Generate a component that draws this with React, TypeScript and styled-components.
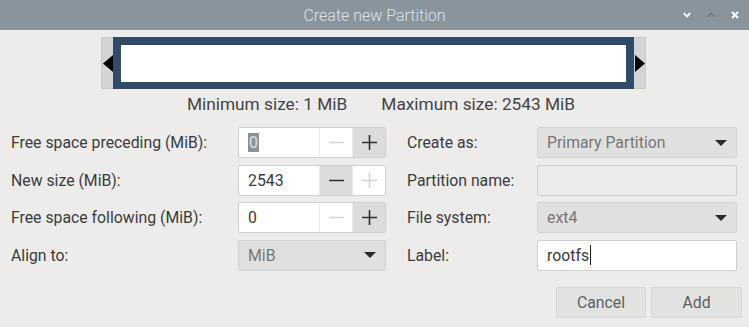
import React from "react";
import styled, { createGlobalStyle } from "styled-components";

const GlobalStyle = createGlobalStyle`
  html, body { margin: 0; padding: 0; background: #edeceb; }
  body { font-family: Roboto, "Liberation Sans", sans-serif; }
  * { box-sizing: border-box; }
`;

const Window = styled.div`
  width: 749px;
  height: 327px;
  display: flex;
  flex-direction: column;
  background: #edeceb;
  overflow: hidden;
`;

const TitleBar = styled.div`
  height: 30px;
  background: #8a949d;
  display: grid;
  grid-template-columns: 1fr auto 1fr;
  align-items: center;
`;

const Title = styled.div`
  color: #dde2e6;
  font-size: 16px;
  font-weight: 300;
`;

const Controls = styled.div`
  display: flex;
  align-items: center;
  justify-content: flex-end;
  gap: 16px;
  padding-right: 10px;
`;

const Control = styled.svg<{ $dim?: boolean }>`
  width: 8px;
  height: 8px;
  color: ${(p) => (p.$dim ? "#6f7982" : "#ffffff")};
`;

const Content = styled.div`
  flex: 1;
  display: flex;
  flex-direction: column;
  padding: 7px 12px 0 11px;
`;

const PartitionBar = styled.div`
  width: 545px;
  height: 52px;
  margin-left: 90px;
  background: #d4d4d3;
  border: 1px solid #c9c9c8;
  display: flex;
  align-items: stretch;
`;

const ArrowZone = styled.div`
  width: 11px;
  display: flex;
  align-items: center;
  justify-content: center;
`;

const PartitionBlock = styled.div`
  flex: 1;
  border: 8px solid #2f4b69;
  border-bottom-width: 7px;
  margin-top: -1px;
  margin-bottom: -1px;
  background: #ffffff;
`;

const InfoRow = styled.div`
  display: flex;
  justify-content: center;
  gap: 34px;
  padding-left: 14px;
  margin-top: 5px;
  font-size: 17.3px;
  color: #444;
  line-height: 20px;
`;

const Form = styled.div`
  display: grid;
  grid-template-columns: 227px 148px 21px 130px 200px;
  grid-auto-rows: 31px;
  row-gap: 6.5px;
  margin-top: 13px;
`;

const Label = styled.div`
  display: flex;
  align-items: center;
  font-size: 15.8px;
  color: #3c3c3c;
`;

const Spacer = styled.div``;

const SpinBox = styled.div`
  display: flex;
  border: 1px solid #cfcfce;
  border-radius: 2px;
  background: #fff;
  overflow: hidden;
`;

const SpinValue = styled.div`
  flex: 1;
  display: flex;
  align-items: center;
  padding-left: 9px;
  font-size: 15.8px;
  color: #3a3a3a;
`;

const Selected = styled.span`
  background: #8a949d;
  color: #dfe3e6;
  padding: 0 1px;
  line-height: 19px;
`;

const SpinButton = styled.div<{ $active: boolean }>`
  width: 33px;
  display: flex;
  align-items: center;
  justify-content: center;
  border-left: 1px solid #ebebea;
  background: ${(p) => (p.$active ? "#dcdcdb" : "#ffffff")};
  color: ${(p) => (p.$active ? "#2f2f2f" : "#d4d4d4")};
`;

const Select = styled.div`
  display: flex;
  align-items: center;
  justify-content: space-between;
  padding: 0 9px 0 9px;
  background: #e0e0df;
  border: 1px solid #d2d2d1;
  border-radius: 2px;
  font-size: 15.8px;
  color: #767676;
`;

const TextField = styled.div<{ $disabled?: boolean }>`
  display: flex;
  align-items: center;
  padding-left: 9px;
  background: ${(p) => (p.$disabled ? "#ebebea" : "#ffffff")};
  border: 1px solid #cfcfce;
  border-radius: 2px;
  font-size: 15.8px;
  color: #3a3a3a;
`;

const Caret = styled.span`
  display: inline-block;
  width: 1px;
  height: 20px;
  background: #222;
  margin-left: 1px;
`;

const ButtonRow = styled.div`
  display: flex;
  justify-content: flex-end;
  gap: 5px;
  margin-top: 16px;
  margin-right: -5px;
`;

const Button = styled.div<{ $w: number }>`
  width: ${(p) => p.$w}px;
  height: 31px;
  display: flex;
  align-items: center;
  justify-content: center;
  background: #e2e2e1;
  border: 1px solid #d6d6d5;
  border-radius: 2px;
  font-size: 15.8px;
  color: #5e5e5e;
`;

const Minus = () => (
  <svg width="15" height="15" viewBox="0 0 15 15">
    <path d="M0 7.5H15" stroke="currentColor" strokeWidth="1.6" />
  </svg>
);

const Plus = () => (
  <svg width="15" height="15" viewBox="0 0 15 15">
    <path d="M0 7.5H15M7.5 0V15" stroke="currentColor" strokeWidth="1.6" />
  </svg>
);

const DropArrow = () => (
  <svg width="12" height="6" viewBox="0 0 12 6">
    <path d="M0 0H12L6 6Z" fill="#2a2a2a" />
  </svg>
);

const Spin = ({
  value,
  minus,
  plus,
  selected,
}: {
  value: string;
  minus: boolean;
  plus: boolean;
  selected?: boolean;
}) => (
  <SpinBox>
    <SpinValue>{selected ? <Selected>{value}</Selected> : value}</SpinValue>
    <SpinButton $active={minus}>
      <Minus />
    </SpinButton>
    <SpinButton $active={plus}>
      <Plus />
    </SpinButton>
  </SpinBox>
);

export default function App() {
  return (
    <>
      <GlobalStyle />
      <Window>
        <TitleBar>
          <span />
          <Title>Create new Partition</Title>
          <Controls>
            <Control viewBox="0 0 8 8">
              <path d="M0.8 2.2L4 5.4L7.2 2.2" stroke="currentColor" strokeWidth="1.8" fill="none" />
            </Control>
            <Control viewBox="0 0 8 8" $dim>
              <path d="M0.8 5.6L4 2.4L7.2 5.6" stroke="currentColor" strokeWidth="1.6" fill="none" />
            </Control>
            <Control viewBox="0 0 8 8">
              <path d="M1 1L7 7M7 1L1 7" stroke="currentColor" strokeWidth="1.9" fill="none" />
            </Control>
          </Controls>
        </TitleBar>
        <Content>
          <PartitionBar>
            <ArrowZone>
              <svg width="10" height="17" viewBox="0 0 10 17">
                <path d="M10 0V17L0 8.5Z" fill="#000" />
              </svg>
            </ArrowZone>
            <PartitionBlock />
            <ArrowZone>
              <svg width="10" height="17" viewBox="0 0 10 17">
                <path d="M0 0V17L10 8.5Z" fill="#000" />
              </svg>
            </ArrowZone>
          </PartitionBar>
          <InfoRow>
            <span>Minimum size: 1 MiB</span>
            <span>Maximum size: 2543 MiB</span>
          </InfoRow>
          <Form>
            <Label>Free space preceding (MiB):</Label>
            <Spin value="0" minus={false} plus={true} selected />
            <Spacer />
            <Label>Create as:</Label>
            <Select>
              <span>Primary Partition</span>
              <DropArrow />
            </Select>

            <Label>New size (MiB):</Label>
            <Spin value="2543" minus={true} plus={false} />
            <Spacer />
            <Label>Partition name:</Label>
            <TextField $disabled />

            <Label>Free space following (MiB):</Label>
            <Spin value="0" minus={false} plus={true} />
            <Spacer />
            <Label>File system:</Label>
            <Select>
              <span>ext4</span>
              <DropArrow />
            </Select>

            <Label>Align to:</Label>
            <Select>
              <span>MiB</span>
              <DropArrow />
            </Select>
            <Spacer />
            <Label>Label:</Label>
            <TextField>
              rootfs
              <Caret />
            </TextField>
          </Form>
          <ButtonRow>
            <Button $w={90}>Cancel</Button>
            <Button $w={91}>Add</Button>
          </ButtonRow>
        </Content>
      </Window>
    </>
  );
}
